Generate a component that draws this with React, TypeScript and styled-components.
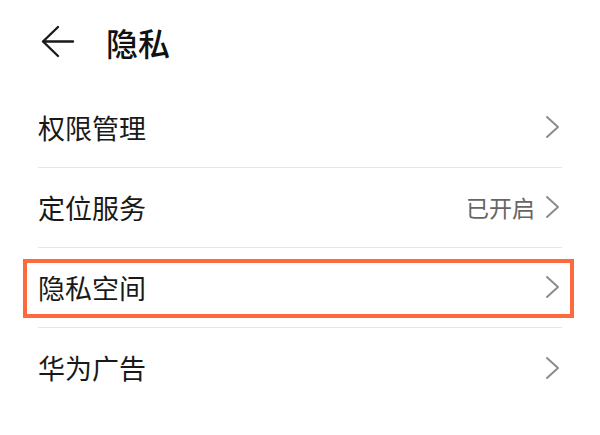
import styled, { createGlobalStyle } from "styled-components";

const GlobalStyle = createGlobalStyle`
  html, body {
    margin: 0;
    padding: 0;
    background: #ffffff;
  }
  body {
    font-family: "Noto Sans CJK SC", "Noto Sans", sans-serif;
    color: #1a1a1a;
  }
`;

const Page = styled.div`
  width: 600px;
  height: 435px;
  background: #ffffff;
  overflow: hidden;
`;

const Header = styled.div`
  height: 88px;
  display: flex;
  align-items: center;
  padding-left: 40px;
  padding-bottom: 4px;
  box-sizing: border-box;
`;

const BackIcon = styled.svg`
  width: 36px;
  height: 34px;
  flex: none;
`;

const Title = styled.div`
  margin-left: 30px;
  font-size: 32px;
  font-weight: 500;
  line-height: 1;
  color: #111;
`;

const List = styled.div`
  margin: 0 38px;
`;

const Row = styled.div<{ last?: boolean }>`
  position: relative;
  height: 80px;
  display: flex;
  align-items: center;
  justify-content: space-between;
  box-sizing: border-box;
  padding-bottom: 1px;
  border-bottom: ${({ last }) => (last ? "none" : "1.5px solid #e6e6e6")};
`;

const Label = styled.div`
  font-size: 27px;
  line-height: 1;
  color: #191919;
`;

const Trailing = styled.div`
  display: flex;
  align-items: center;
  gap: 10px;
`;

const Status = styled.div`
  font-size: 23px;
  line-height: 1;
  color: #666;
`;

const Chevron = styled.svg`
  width: 17px;
  height: 24px;
  flex: none;
`;

const Highlight = styled.div`
  position: absolute;
  left: -15px;
  right: -12px;
  top: 11px;
  bottom: 9px;
  border: 4.5px solid #ff6a3d;
  pointer-events: none;
`;

const items = [
  { label: "权限管理" },
  { label: "定位服务", status: "已开启" },
  { label: "隐私空间", highlighted: true },
  { label: "华为广告" },
];

export default function App() {
  return (
    <Page>
      <GlobalStyle />
      <Header>
        <BackIcon viewBox="0 0 36 34">
          <path
            d="M33 16.5H3M18 2L3 16.5L18 31"
            fill="none"
            stroke="#1a1a1a"
            strokeWidth="2.4"
            strokeLinecap="round"
            strokeLinejoin="round"
          />
        </BackIcon>
        <Title>隐私</Title>
      </Header>
      <List>
        {items.map((item, i) => (
          <Row key={item.label} last={i === items.length - 1}>
            <Label>{item.label}</Label>
            <Trailing>
              {item.status && <Status>{item.status}</Status>}
              <Chevron viewBox="0 0 17 24">
                <path
                  d="M2 2L13 12L2 22"
                  fill="none"
                  stroke="#8c8c8c"
                  strokeWidth="2"
                  strokeLinecap="round"
                  strokeLinejoin="round"
                />
              </Chevron>
            </Trailing>
            {item.highlighted && <Highlight />}
          </Row>
        ))}
      </List>
    </Page>
  );
}
